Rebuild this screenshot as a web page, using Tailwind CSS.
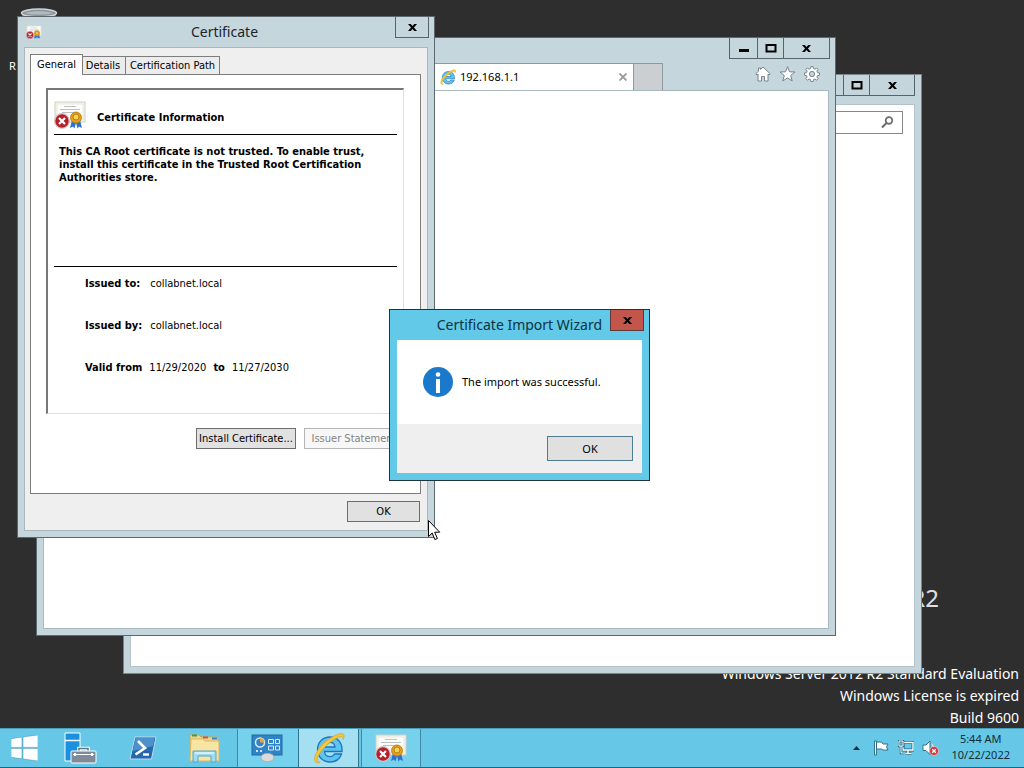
<!DOCTYPE html>
<html lang="en">
<head>
<meta charset="utf-8">
<title>Desktop</title>
<script src="https://cdn.jsdelivr.net/npm/@tailwindcss/browser@4"></script>
</head>
<body class="flex h-screen flex-col overflow-hidden bg-[#2e2e2e] font-['Noto_Sans','Open_Sans',sans-serif] text-black">

<!-- Shared icon symbols -->
<svg class="hidden" aria-hidden="true">
  <symbol id="close" viewBox="0 0 10 10"><path d="M0 1h3l2 2.400 2-2.400h3L6.600 5 10 9H7L5 6.600 3 9H0l3.400-4z"/></symbol>
  <symbol id="max" viewBox="0 0 12 10"><path d="M1.500 2h9v6.500h-9z" fill="none" stroke="#000" stroke-width="2"/></symbol>
  <symbol id="cert" viewBox="0 0 32 28">
    <rect x="1" y="1" width="30" height="20" fill="#f7f6f0" stroke="#cfcdc0"/>
    <rect x="3" y="3" width="26" height="16" fill="#fdfdfb" stroke="#dedccf" stroke-width=".6"/>
    <path d="M10 5.500h12M6 8.500h20M8 11.500h16" stroke="#b4b8bc" stroke-width=".9"/>
    <path d="M18 19l-2 8 3-1.500 1.500 2 2-7.500zM26 19l2 8-3-1.500-1.500 2-2-7.500z" fill="#2f6fd2"/>
    <circle cx="22" cy="16.500" r="5.500" fill="#e3a21a" stroke="#b67a08" stroke-width=".8"/>
    <circle cx="22" cy="16" r="3" fill="#f6cf55" stroke="#a9700a" stroke-width=".8"/>
    <circle cx="8" cy="20" r="7.300" fill="#b3222b" stroke="#d9c3c3" stroke-width="1.200"/>
    <path d="M5 17l6 6M11 17l-6 6" stroke="#fff" stroke-width="2.200"/>
  </symbol>
  <symbol id="ie" viewBox="0 0 32 32">
    <path d="M29 17.500c0-7.500-5-12.500-12-12.500S4.500 10 4.500 17.500 10 30 17 30c5.500 0 9.800-3 11.500-8h-7c-1 1.800-2.500 2.700-4.500 2.700-3 0-5.200-2-5.500-5.200H29zM11.700 15c.6-2.900 2.600-4.700 5.300-4.700s4.600 1.800 5 4.700z" fill="#5fc3f0" stroke="#1c76bd" stroke-width="1.300"/>
    <path d="M2.500 30C-1 26 6 13.500 16 7 23 2.300 30 0 31 3c.4 1.300-.2 3-1 4.500.2-1.800-.2-2.900-1.500-2.900-3 0-9 3.400-14.500 8.400C7 19.500 3 26 4.500 29c.4.900 1.400 1.200 2.700 1-1.800.9-3.700 1.100-4.700 0z" fill="#f5c73b" stroke="#d9a832" stroke-width=".9"/>
  </symbol>
</svg>

<main class="relative min-h-0 flex-1 overflow-hidden">

  <!-- Desktop icon -->
  <div class="absolute left-[9px] top-2 flex flex-col text-[11px] leading-4 text-white">
    <svg class="ml-[11px] h-[50px] w-[38px]" viewBox="0 0 38 50"><path d="M2 5l5 43h24l5-43z" fill="#8b9499"/><ellipse cx="19" cy="5" rx="17.500" ry="4" fill="#8b949a" stroke="#cdd4d8" stroke-width="1.500"/><path d="M5 5c6-2.500 22-2.500 28 0-6 2-22 2-28 0z" fill="#b3bbc0"/></svg>
    <span>R</span>
  </div>

  <!-- Watermark -->
  <div class="absolute bottom-[114px] right-[85px] whitespace-nowrap text-[24px] leading-8 text-[#e0e0e0]">Windows Server 2012 R2</div>
  <div class="absolute -bottom-px right-[5px] text-right text-sm leading-[22px] text-white">
    <p>Windows Server 2012 R2 Standard Evaluation</p>
    <p>Windows License is expired</p>
    <p>Build 9600</p>
  </div>

  <!-- Back window -->
  <section class="absolute left-[123px] top-[74px] flex h-[600px] w-[799px] flex-col border border-[#7a8588] bg-[#c4d5db] px-1.5 pb-1.5">
    <header class="flex h-[29px] items-start justify-end">
      <div class="flex h-[21px] border-x border-b border-[#55636b]">
        <button aria-label="Minimize" class="flex w-7 items-center justify-center"><span class="mt-1 h-[3px] w-2.5 bg-black"></span></button>
        <button aria-label="Maximize" class="flex w-[26px] items-center justify-center border-l border-[#55636b]"><svg class="h-2.5 w-3"><use href="#max"/></svg></button>
        <button aria-label="Close" class="flex w-[45px] items-center justify-center border-l border-[#55636b]"><svg class="size-[9px]"><use href="#close"/></svg></button>
      </div>
    </header>
    <div class="flex flex-1 justify-end border border-[#b3c3c9] bg-white pr-[11px] pt-1.5">
      <label class="flex h-[23px] w-64 items-center border border-[#85898b] bg-white pr-2">
        <input aria-label="Search" type="text" class="min-w-0 flex-1 px-1 text-[11px] outline-none">
        <svg class="size-[13px]" viewBox="0 0 13 13" fill="none" stroke="#6c6c6c"><circle cx="8" cy="4.500" r="3.300" stroke-width="1.700"/><path d="M5.500 7L1 11.500" stroke-width="2.200"/></svg>
      </label>
    </div>
  </section>

  <!-- Browser window -->
  <section class="absolute left-[36px] top-[37px] flex h-[599px] w-[800px] flex-col border border-[#5c686d] bg-[#c5d6dc] px-1.5 pb-1.5">
    <header class="-mr-px flex h-[25px] items-start justify-end">
      <div class="flex h-[21px] border-x border-b border-[#55636b]">
        <button aria-label="Minimize" class="flex w-[27px] items-center justify-center"><span class="mt-1 h-[3px] w-2.5 bg-black"></span></button>
        <button aria-label="Maximize" class="flex w-[26px] items-center justify-center border-l border-[#55636b]"><svg class="h-2.5 w-3"><use href="#max"/></svg></button>
        <button aria-label="Close" class="flex w-[46px] items-center justify-center border-l border-[#55636b]"><svg class="size-[9px]"><use href="#close"/></svg></button>
      </div>
    </header>
    <nav class="flex h-[27px] items-stretch pl-[356px]">
      <div class="flex w-[235px] items-center border border-b-0 border-[#8f9a9f] bg-white pl-10 pr-1.5 text-[11px] leading-4">
        <svg class="mr-1 size-4"><use href="#ie"/></svg>
        <span class="flex-1">192.168.1.1</span>
        <button aria-label="Close tab"><svg class="size-2" viewBox="0 0 8 8"><path d="M.5.5l7 7M7.500.5l-7 7" stroke="#999" stroke-width="1.800"/></svg></button>
      </div>
      <button aria-label="New tab" class="w-[29px] border-r border-t border-[#8f9a9f] bg-[#cbcfd1]"></button>
      <div class="flex flex-1 items-start justify-end gap-2 pr-[9px] pt-[3px]">
        <button aria-label="Home"><svg class="size-4" viewBox="0 0 16 16"><path d="M8 1l7.200 6.800-1.200 1.200-1-.9V15H9.500v-4.500h-3V15H3V8.100l-1 .9L.8 7.800 3.500 5.200V2H5.500v1.400z" fill="#fff" stroke="#74858e"/></svg></button>
        <button aria-label="Favorites"><svg class="h-4 w-[17px]" viewBox="0 0 16 16"><path d="M8 .6l2 5.200 5.500.2-4.300 3.500 1.500 5.400L8 11.900l-4.700 3 1.500-5.400L.5 6 6 5.800z" fill="#fff" stroke="#74858e"/></svg></button>
        <button aria-label="Tools"><svg class="size-4" viewBox="0 0 16 16"><path d="M6.900.6h2.200l.4 2 1.400.6 1.700-1.200 1.500 1.500-1.200 1.700.6 1.400 2 .4v2.200l-2 .4-.6 1.400 1.200 1.700-1.500 1.500-1.700-1.200-1.400.6-.4 2H6.900l-.4-2-1.400-.6-1.700 1.200-1.500-1.500 1.200-1.700-.6-1.400-2-.4V7l2-.4.6-1.400-1.200-1.700 1.500-1.500 1.700 1.200 1.400-.6z" fill="#fff" stroke="#74858e"/><circle cx="8" cy="8" r="2.600" fill="#c5d6dc" stroke="#74858e"/></svg></button>
      </div>
    </nav>
    <div class="flex-1 border border-[#a9b8be] bg-white"></div>
  </section>

  <!-- Certificate dialog -->
  <section class="absolute left-[17px] top-4 flex h-[522px] w-[418px] flex-col border border-[#5c686d] bg-[#c5d6dc] px-1.5 pb-1.5 font-['DejaVu_Sans_Condensed','DejaVu_Sans',sans-serif] text-[11px] leading-[13px]">
    <header class="relative -mr-px flex h-[30px] items-start">
      <svg class="ml-0.5 mt-[7px] size-4"><use href="#cert"/></svg>
      <h1 class="absolute left-0 right-1 top-[5px] text-center font-['Noto_Sans','Open_Sans',sans-serif] text-sm leading-5 text-[#1d2529]">Certificate</h1>
      <button aria-label="Close" class="relative ml-auto flex h-[21px] w-[34px] items-center justify-center border-x border-b border-[#55636b]"><svg class="size-[9px]"><use href="#close"/></svg></button>
    </header>
    <div class="flex flex-1 flex-col border border-[#a9b8be] bg-[#efefef] pb-2 pl-[5px] pr-1.5 pt-1.5">
      <div role="tablist" class="relative z-10 -mb-px flex items-end">
        <button role="tab" aria-selected="true" class="h-[21px] w-[53px] border border-b-0 border-[#7d7d7d] bg-white pb-0.5">General</button>
        <button role="tab" class="mb-px h-[18px] w-[43px] border border-b-0 border-l-0 border-[#7d7d7d] bg-[#ececec] pr-0.5 text-center">Details</button>
        <button role="tab" class="mb-px h-[18px] w-[94px] whitespace-nowrap border border-b-0 border-l-0 border-[#7d7d7d] bg-[#ececec]">Certification Path</button>
      </div>
      <div class="flex flex-1 flex-col border border-[#7d7d7d] bg-white pl-[15px] pr-4 pt-[13px]">
        <div class="h-[326px] border-b border-l-2 border-r border-t-2 border-b-[#dedede] border-l-[#777] border-r-[#dedede] border-t-[#777] px-1.5">
          <div class="flex h-[45px] items-center border-b border-black pt-1.5">
            <svg class="h-7 w-8"><use href="#cert"/></svg>
            <h2 class="ml-[11px] pt-1 font-bold">Certificate Information</h2>
          </div>
          <p class="h-[132px] whitespace-nowrap border-b border-black pl-[5px] pt-2.5 font-bold">This CA Root certificate is not trusted. To enable trust,<br>install this certificate in the Trusted Root Certification<br>Authorities store.</p>
          <dl class="flex flex-col gap-[29px] pl-[31px] pt-2.5">
            <div class="flex gap-2.5"><dt class="font-bold">Issued to:</dt><dd>collabnet.local</dd></div>
            <div class="flex gap-2"><dt class="font-bold">Issued by:</dt><dd>collabnet.local</dd></div>
            <div class="flex gap-[7px]"><dt class="font-bold">Valid from</dt><dd>11/29/2020</dd><dt class="font-bold">to</dt><dd>11/27/2030</dd></div>
          </dl>
        </div>
        <div class="mt-3.5 flex justify-end gap-2">
          <button class="h-[21px] w-[100px] whitespace-nowrap border border-[#6d6d6d] bg-[#e1e1e1]">Install Certificate...</button>
          <button disabled class="h-[21px] w-[100px] whitespace-nowrap border border-[#b5b5b5] bg-[#f7f7f7] text-[#838383]">Issuer Statement</button>
        </div>
      </div>
      <div class="flex justify-end pr-px pt-[7px]">
        <button class="h-[21px] w-[73px] border border-[#6d6d6d] bg-[#e1e1e1]">OK</button>
      </div>
    </div>
  </section>

  <!-- Import wizard message -->
  <section role="dialog" aria-labelledby="wizard-title" class="absolute left-[389px] top-[309px] flex h-[172px] w-[261px] flex-col border border-[#1f333b] bg-[#62c9e8] px-[7px] pb-[7px]">
    <header class="-mr-0.5 flex h-[30px] items-start justify-end gap-2">
      <h1 id="wizard-title" class="whitespace-nowrap pt-[5px] text-sm leading-5 text-[#0d3441]">Certificate Import Wizard</h1>
      <button aria-label="Close" class="flex h-[21px] w-[34px] items-center justify-center border-x border-b border-[#5b3a39] bg-[#c3564b]"><svg class="size-[9px]"><use href="#close"/></svg></button>
    </header>
    <div class="flex flex-1 items-center gap-[9px] bg-white pl-[26px] text-[11px] leading-4">
      <svg class="size-[30px]" viewBox="0 0 30 30"><circle cx="15" cy="15" r="15" fill="#1b79cc"/><circle cx="15" cy="7.500" r="2.300" fill="#fff"/><path d="M13 12h4v14h-4z" fill="#fff"/></svg>
      <p>The import was successful.</p>
    </div>
    <footer class="flex h-[49px] items-center justify-end bg-[#efefef] pr-[9px]">
      <button class="h-[25px] w-[86px] border border-[#4f7c92] bg-[#e0e0e0] text-[11px] leading-4">OK</button>
    </footer>
  </section>

  <!-- Mouse pointer -->
  <svg class="absolute left-[427px] top-[519px] h-[22px] w-[14px]" viewBox="0 0 14 22"><path d="M1.500 1.500v16l3.700-3.500 2.600 6.500 2.600-1-2.700-6.300h5z" fill="#fff" stroke="#000"/></svg>
</main>

<!-- Taskbar -->
<footer class="flex h-10 items-stretch border-y border-t-[#4a9cb8] border-b-[#2d5f70] bg-[#66c8e6]">
  <button aria-label="Start" class="flex w-[49px] items-center justify-center"><svg class="h-[26px] w-[27px]" viewBox="0 0 27 26" fill="#fff" stroke="#4d8fa8" stroke-width=".5"><path d="M0 3.700l11-1.600v10.300H0zM12 1.900L27 0v12.400H12zM0 13.400h11v10.400L0 22.300zM12 13.400h15V26l-15-2z"/></svg></button>
  <button aria-label="Server Manager" class="flex w-[63px] items-center justify-center"><svg class="h-8 w-[34px]" viewBox="0 0 34 32"><path d="M1 1h15v28H1z" fill="#1b8fe0" stroke="#fff"/><path d="M1 8.500h15" stroke="#fff" stroke-width="1.500"/><path d="M15 19v-2.500h9V19" fill="none" stroke="#fff" stroke-width="3.500"/><path d="M15 19v-2.500h9V19" fill="none" stroke="#66707b" stroke-width="1.500"/><rect x="7" y="19" width="25" height="12" rx="1" fill="#7f8b98" stroke="#fff"/><path d="M9 22.500h21" stroke="#fff"/><path d="M11 21v3M28 21v3" stroke="#fff" stroke-width="2"/></svg></button>
  <button aria-label="PowerShell" class="flex w-[62px] items-center justify-center"><svg class="h-6 w-7" viewBox="0 0 28 24"><path d="M6 1h21l-4.500 22H1z" fill="#2568ae" stroke="#bcdcf0" stroke-linejoin="round"/><path d="M6.700 2h19L24 10 3.800 15z" fill="#4c91cb"/><path d="M9 5l7 7-9.500 6.500" fill="none" stroke="#fff" stroke-width="2.600"/><path d="M14 18.500h6" stroke="#fff" stroke-width="2.400"/></svg></button>
  <button aria-label="File Explorer" class="flex w-[63px] items-center justify-center pr-0.5"><svg class="h-[30px] w-[33px]" viewBox="0 0 33 30"><path d="M2 2h9l2 2h17v7H2z" fill="#efd58a" stroke="#cfa750"/><path d="M4 2.500h5" stroke="#3a9c48" stroke-width="2"/><path d="M15 4.500h5" stroke="#d6523b" stroke-width="2"/><path d="M24 5.500h5" stroke="#3c83c5" stroke-width="2"/><path d="M3 6h12l2 2h14v20H2z" fill="#f8e5a3" stroke="#d9b765"/><path d="M5 29V18h23v11h-5v-6H10v6z" fill="#9ddcf2" stroke="#53a6c9"/><path d="M7 20h19" stroke="#e3f7ff" stroke-width="1.500"/></svg></button>
  <button aria-label="Control Panel" class="flex w-[61px] items-center justify-center border-l border-[#3f8aa5] bg-[#76d1ed] pr-0.5"><svg class="h-7 w-8" viewBox="0 0 32 28"><rect x="1" y="1" width="30" height="20" fill="#2f83c6" stroke="#2668a0"/><circle cx="9" cy="8.500" r="4.500" fill="none" stroke="#d8ecf8" stroke-width="1.500"/><path d="M9 8.500V4a4.500 4.500 0 014.500 4.500z" fill="#f0a63c"/><path d="M17.500 5.500h5v4h-5zM24.500 5.500h4v4h-4zM17.500 12h5v4h-5zM24.500 12h4v4h-4z" fill="#2f83c6" stroke="#d8ecf8"/><path d="M5 17h2M9 17h2" stroke="#fff" stroke-width="1.500"/><ellipse cx="16.500" cy="23.500" rx="6.500" ry="4.200" fill="#dfd8d8" stroke="#a8a2a6" stroke-width=".7"/></svg></button>
  <button aria-label="Internet Explorer" class="flex w-[61px] items-center justify-center border-x border-[#31748d] bg-[#a5e0f2]"><svg class="size-8"><use href="#ie"/></svg></button>
  <button aria-label="Certificate" class="ml-0.5 flex w-[60px] items-center justify-center border-x border-[#3f8aa5] bg-[#76d1ed]"><svg class="h-[30px] w-8"><use href="#cert"/></svg></button>
  <div class="ml-auto flex items-center pr-3.5 text-[#0e2f3c]">
    <button aria-label="Show hidden icons" class="mr-[13px]"><svg class="h-1 w-[7px]" viewBox="0 0 7 4"><path d="M0 4l3.500-4L7 4z" fill="#0e2f3c"/></svg></button>
    <button aria-label="Action Center" class="mr-2"><svg class="h-4 w-[17px]" viewBox="0 0 17 16"><path d="M1.500 1h2v14h-2zM3.500 2h5l1.500 2h5l-1.500 3 1.500 3h-5L8.500 9h-5z" fill="#fff" stroke="#286780" stroke-width=".9"/></svg></button>
    <button aria-label="Network" class="mr-2"><svg class="size-4" viewBox="0 0 16 16"><path d="M5 2.500h10v7.500H5zM7.500 13.500h6M10 10v3" fill="none" stroke="#286780" stroke-width="3"/><path d="M5 2.500h10v7.500H5zM7.500 13.500h6M10 10v3" fill="none" stroke="#fff" stroke-width="1.400"/><path d="M1 1h4v5H1zM3 6v7h3" fill="#66c8e6" stroke="#286780" stroke-width="2.400"/><path d="M1 1h4v5H1zM3 6v7h3" fill="none" stroke="#fff"/></svg></button>
    <button aria-label="Volume" class="mr-3"><svg class="h-4 w-[17px]" viewBox="0 0 17 16"><path d="M1 5h3l4-4v13.500l-4-4H1z" fill="#fff" stroke="#286780" stroke-width=".9"/><path d="M10 4c1 1 1 2 1 3" fill="none" stroke="#fff"/><circle cx="12" cy="11" r="4.500" fill="#d4383c" stroke="#f3c9c9" stroke-width=".7"/><path d="M10.200 9.200l3.600 3.600M13.800 9.200l-3.600 3.600" stroke="#fff" stroke-width="1.400"/></svg></button>
    <time class="flex flex-col items-center pb-0.5 text-[11px] leading-4" datetime="2022-10-22T05:44"><span>5:44 AM</span><span>10/22/2022</span></time>
  </div>
</footer>
</body>
</html>
